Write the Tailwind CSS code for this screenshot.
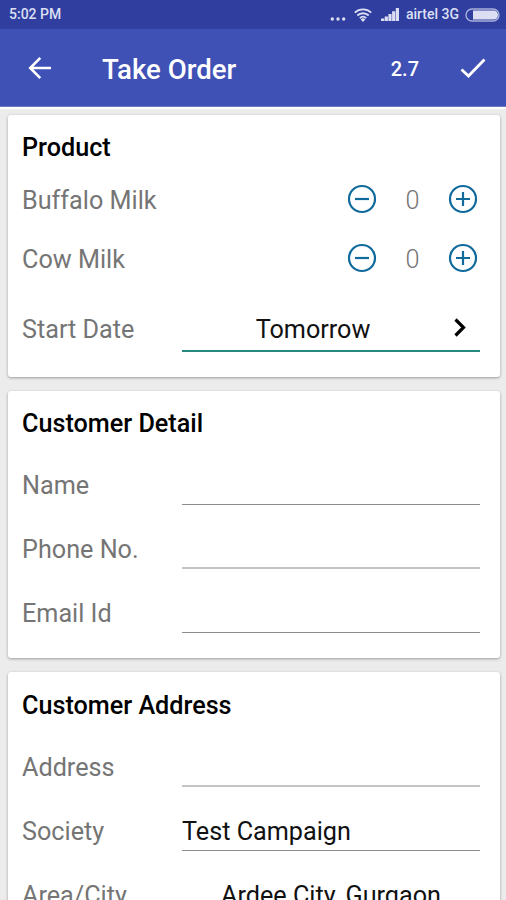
<!DOCTYPE html>
<html lang="en">
<head>
  <meta charset="UTF-8" />
  <meta name="viewport" content="width=device-width, initial-scale=1" />
  <title>Take Order</title>
  <script src="https://cdn.jsdelivr.net/npm/@tailwindcss/browser@4"></script>
</head>
<body class="bg-[#ececec] font-['Roboto',sans-serif] h-[900px] overflow-hidden flex flex-col">
  <!-- Status bar -->
  <div class="h-[29px] shrink-0 bg-[#303f9f] text-[#dcdff3] flex items-center justify-between pl-[9px] pr-[6px]">
    <span class="text-[14px] font-medium">5:02 PM</span>
    <div class="flex items-center">
      <svg class="w-4 h-4 mr-[8px]" viewBox="0 0 16 16" fill="currentColor">
        <circle cx="2.3" cy="12" r="1.7" /><circle cx="8" cy="12" r="1.7" /><circle cx="13.7" cy="12" r="1.7" />
      </svg>
      <svg class="w-[18px] h-[14px] mr-[9px]" viewBox="0 0 18 14" fill="none" stroke="currentColor" stroke-width="1.8">
        <path d="M.8 4.6a12 12 0 0 1 16.4 0M3.3 7.5a8.3 8.3 0 0 1 11.4 0M5.8 10.1a4.8 4.8 0 0 1 6.4 0" />
        <path d="M9 14l-2.3-2.6a3.4 3.4 0 0 1 4.6 0z" fill="currentColor" stroke="none" />
      </svg>
      <svg class="w-[18px] h-[13px] mr-[7px]" viewBox="0 0 18 13" fill="currentColor">
        <path d="M0 10.5h3.200V13H0zM3.7 8.5h3.200V13H3.700zM7.4 6h3.200v7H7.400zM11.1 3.2h3.200V13h-3.200zM14.8 0H18v13h-3.200z" />
      </svg>
      <span class="text-[14px] font-medium mr-[6px]">airtel 3G</span>
      <svg class="w-[35px] h-[14px]" viewBox="0 0 35 14">
        <rect x="1" y="1" width="33" height="12" rx="6" fill="none" stroke="currentColor" stroke-opacity=".7" stroke-width="1.4" />
        <path d="M8 2.5h20.500a4.500 4.500 0 0 1 0 9H8z" fill="currentColor" />
      </svg>
    </div>
  </div>

  <!-- App bar -->
  <header class="h-[78px] shrink-0 bg-[#3f51b5] border-b border-[#6d79c6] text-white flex items-center pl-[28px] pr-[20px]">
    <svg class="w-[24px] h-[24px]" viewBox="0 0 24 24" fill="none" stroke="currentColor" stroke-width="2.6">
      <path d="M23 12H2.500M12.300 1.800L2.200 12l10.100 10.200" />
    </svg>
    <h1 class="text-[27.6px] font-medium ml-[50px] flex-1 pt-[4px]">Take Order</h1>
    <span class="text-[20px] font-medium mr-[41px] pt-[2px]">2.7</span>
    <svg class="w-[26px] h-[20px]" viewBox="0 0 26 20" fill="none" stroke="currentColor" stroke-width="2.8">
      <path d="M1.500 11.500L8.500 18 24.500 1.500" />
    </svg>
  </header>

  <main class="flex-1 min-h-0 overflow-hidden flex flex-col gap-[14px] pl-[8px] pr-[6px] pt-[6px] border-t-2 border-white text-[25.2px] text-[#757575]">
    <!-- Product -->
    <section class="h-[262px] shrink-0 bg-white rounded-[3px] shadow-[0_1px_3px_rgba(0,0,0,0.35)] pl-[14px] pr-[20px] pt-[17px]">
      <h2 class="h-8 leading-8 font-medium text-black">Product</h2>
      <div class="h-[59px] mt-[7px] flex items-center">
        <span class="flex-1">Buffalo Milk</span>
        <svg class="w-[30px] h-[30px] mb-[4px]" viewBox="0 0 30 30" fill="none" stroke="#106a9c" stroke-width="2.2">
          <circle cx="15" cy="15" r="13" /><path d="M8 15h14" />
        </svg>
        <span class="w-[71px] text-center font-light">0</span>
        <svg class="w-[30px] h-[30px] mr-[2px] mb-[4px]" viewBox="0 0 30 30" fill="none" stroke="#106a9c" stroke-width="2.2">
          <circle cx="15" cy="15" r="13" /><path d="M8 15h14M15 8v14" />
        </svg>
      </div>
      <div class="h-[59px] flex items-center">
        <span class="flex-1">Cow Milk</span>
        <svg class="w-[30px] h-[30px] mb-[4px]" viewBox="0 0 30 30" fill="none" stroke="#106a9c" stroke-width="2.2">
          <circle cx="15" cy="15" r="13" /><path d="M8 15h14" />
        </svg>
        <span class="w-[71px] text-center font-light">0</span>
        <svg class="w-[30px] h-[30px] mr-[2px] mb-[4px]" viewBox="0 0 30 30" fill="none" stroke="#106a9c" stroke-width="2.2">
          <circle cx="15" cy="15" r="13" /><path d="M8 15h14M15 8v14" />
        </svg>
      </div>
      <div class="h-[63px] pt-[18px] flex">
        <span class="w-[160px] leading-[45px] h-[45px]">Start Date</span>
        <div class="flex-1 h-[45px] border-b-2 border-[#26897b] flex items-center text-[#111]">
          <span class="flex-1 text-center pr-[10px] pt-[2px]">Tomorrow</span>
          <svg class="w-[12px] h-[20px] mr-[14px] mb-px" viewBox="0 0 12 20" fill="none" stroke="#000" stroke-width="3.2">
            <path d="M1.500 1.500L9.500 9.500l-8 8" />
          </svg>
        </div>
      </div>
    </section>

    <!-- Customer detail -->
    <section class="h-[267px] shrink-0 bg-white rounded-[3px] shadow-[0_1px_3px_rgba(0,0,0,0.35)] pl-[14px] pr-[20px] pt-[17px]">
      <h2 class="h-8 leading-8 font-medium text-black">Customer Detail</h2>
      <div class="h-16 mt-px pt-6 flex">
        <span class="w-[160px] leading-[42px]">Name</span>
        <div class="flex-1 border-b border-[#8c8c8c]"></div>
      </div>
      <div class="h-16 pt-6 flex">
        <span class="w-[160px] leading-[42px]">Phone No.</span>
        <div class="flex-1 border-b-2 border-[#c4c4c4]"></div>
      </div>
      <div class="h-16 pt-6 flex">
        <span class="w-[160px] leading-[42px]">Email Id</span>
        <div class="flex-1 border-b border-[#8c8c8c]"></div>
      </div>
    </section>

    <!-- Customer address -->
    <section class="h-[300px] shrink-0 bg-white rounded-[3px] shadow-[0_1px_3px_rgba(0,0,0,0.35)] pl-[14px] pr-[20px] pt-[18px]">
      <h2 class="h-8 leading-8 font-medium text-black">Customer Address</h2>
      <div class="h-16 mt-px pt-6 flex">
        <span class="w-[160px] leading-[42px]">Address</span>
        <div class="flex-1 border-b-2 border-[#c4c4c4]"></div>
      </div>
      <div class="h-16 pt-6 flex">
        <span class="w-[160px] leading-[42px]">Society</span>
        <div class="flex-1 border-b border-[#8c8c8c] leading-[42px] text-[#111]">Test Campaign</div>
      </div>
      <div class="h-16 pt-6 flex">
        <span class="w-[160px] leading-[42px]">Area/City</span>
        <div class="flex-1 border-b border-[#8c8c8c] leading-[42px] text-[#111] text-center">Ardee City, Gurgaon</div>
      </div>
    </section>
  </main>
</body>
</html>
